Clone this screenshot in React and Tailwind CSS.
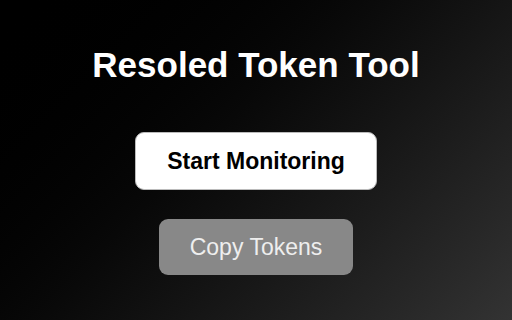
export default function App() {
  return (
    <div
      className="w-full h-screen flex flex-col items-center justify-center bg-linear-135 from-[#000000] to-[#333333] text-white"
      style={{ fontFamily: '"Liberation Sans", Arial, sans-serif' }}
    >
      <h1 className="text-[35px] font-bold leading-[40px]">Resoled Token Tool</h1>

      <button className="mt-[47px] px-[31px] py-[15px] bg-white text-black text-[23px] font-bold leading-[26px] rounded-[9px] border border-[#bbbbbb]">
        Start Monitoring
      </button>

      <button className="mt-[29px] px-[31px] py-[15px] bg-[#888888] text-[#eeeeee] text-[23px] leading-[26px] rounded-[9px]">
        Copy Tokens
      </button>
    </div>
  );
}
